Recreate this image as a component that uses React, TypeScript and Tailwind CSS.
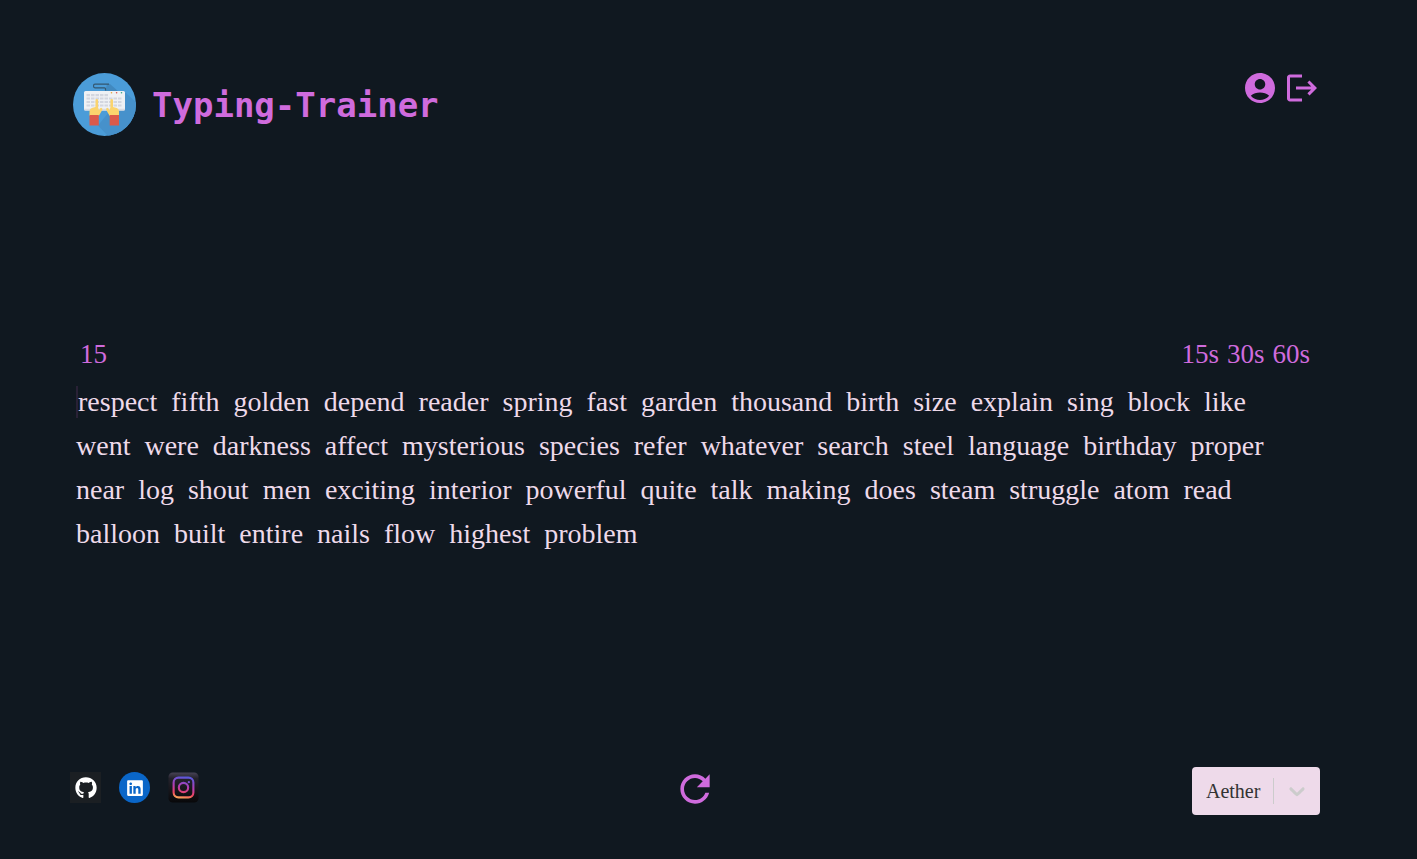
import { useState } from "react";
import type { ReactNode } from "react";
import { FaGithub, FaLinkedin } from "react-icons/fa";

const WORDS =
  "respect fifth golden depend reader spring fast garden thousand birth size explain sing block like went were darkness affect mysterious species refer whatever search steel language birthday proper near log shout men exciting interior powerful quite talk making does steam struggle atom read balloon built entire nails flow highest problem".split(
    " ",
  );

const DURATIONS = [15, 30, 60];

function Hand() {
  return (
    <>
      <path
        d="M17.5 44v-4.500q0-2.800 2.300-3.400l3.700-1.100V28.300q0-1.300 1.300-1.300t1.300 1.300V35.500l.9 3 1.200-2.300q.9-1 1.900.1.500.9 0 2l-3.300 5.700z"
        fill="#fbd46d"
      />
      <path d="M17.500 43h9.300v10.500h-9.300z" fill="#dc5a4b" />
    </>
  );
}

function Logo() {
  return (
    <svg viewBox="0 0 64 64" className="size-16" aria-hidden="true">
      <defs>
        <clipPath id="logo-disc">
          <circle cx="32.5" cy="32.5" r="31.5" />
        </clipPath>
      </defs>
      <g clipPath="url(#logo-disc)">
        <rect width="64" height="64" fill="#4b9cd8" />
        <path d="M35 12h3l9 8H33z" fill="#4189bf" />
        <path d="M53 20 66 32V66H38L26 53.500z" fill="#4691cb" />
        <path
          d="M33.500 18.500v-1.700q0-1-1-1H23q-1.500 0-1.500-1.800t1.500-1.800h14"
          fill="none"
          stroke="#34566e"
          strokeWidth="1.200"
        />
        <rect x="12" y="19" width="41" height="19.500" rx="1.500" fill="#eff1f4" />
        <path d="M12 36.800h41v.5q0 1.200-1.200 1.200H13.200q-1.200 0-1.200-1.200z" fill="#d8dbe2" />
        <path
          d="M14.500 23.200h22M14.500 26.500h36M14.500 30h36M14.500 33.500h36"
          stroke="#d3d6df"
          strokeWidth="2.200"
          strokeDasharray="3.500 1"
        />
        <circle cx="39.500" cy="20.800" r=".8" fill="#e7a53b" />
        <circle cx="44.600" cy="20.800" r=".8" fill="#d9534a" />
        <circle cx="49.500" cy="20.800" r=".8" fill="#35a58b" />
        <Hand />
        <g transform="translate(64.500 0) scale(-1 1)">
          <Hand />
        </g>
      </g>
    </svg>
  );
}

function InstagramLogo() {
  return (
    <svg viewBox="0 0 32 32" className="size-[31px]" aria-hidden="true">
      <defs>
        <linearGradient id="ig-tile" x1="0" y1="0" x2="0" y2="1">
          <stop offset="0" stopColor="#474355" />
          <stop offset=".2" stopColor="#24222b" />
          <stop offset="1" stopColor="#08080a" />
        </linearGradient>
        <linearGradient id="ig-glyph" gradientUnits="userSpaceOnUse" x1="18" y1="5" x2="14" y2="27">
          <stop offset="0" stopColor="#5a58dc" />
          <stop offset=".5" stopColor="#b83cae" />
          <stop offset=".8" stopColor="#ee4560" />
          <stop offset="1" stopColor="#f9a35a" />
        </linearGradient>
      </defs>
      <rect x=".5" y=".5" width="31" height="31" rx="4.500" fill="url(#ig-tile)" />
      <g fill="none" stroke="url(#ig-glyph)" strokeWidth="2.200">
        <rect x="5.800" y="5.800" width="20.400" height="20.400" rx="5" />
        <circle cx="16" cy="16" r="4.800" />
      </g>
      <circle cx="21.500" cy="10.500" r="1.200" fill="#7a50d4" />
    </svg>
  );
}

function Icon({ path, className }: { path: string; className: string }) {
  return (
    <svg viewBox="0 0 24 24" fill="currentColor" className={className} aria-hidden="true">
      <path d={path} />
    </svg>
  );
}

function SocialLink({ href, label, children }: { href: string; label: string; children: ReactNode }) {
  return (
    <a href={href} aria-label={label} className="flex size-[31px] items-center justify-center">
      {children}
    </a>
  );
}

export default function App() {
  const [duration, setDuration] = useState(15);

  return (
    <div className="flex min-h-screen flex-col justify-between bg-[#101820] pt-[70px] pr-[97px] pb-11 pl-[70px] font-['Liberation_Serif',serif] text-[#cf6bdd]">
      <header className="flex items-start justify-between">
        <div className="flex items-center gap-4 pt-0.5 pl-0.5">
          <Logo />
          <h1 className="pt-0.5 font-['DejaVu_Sans_Mono',monospace] text-[34px] leading-10 font-bold">
            Typing-Trainer
          </h1>
        </div>
        <nav className="flex gap-1.5">
          <button type="button" aria-label="Account">
            <Icon
              className="size-9"
              path="M12 2C6.48 2 2 6.48 2 12s4.48 10 10 10 10-4.48 10-10S17.52 2 12 2zm0 4c1.93 0 3.5 1.57 3.5 3.5S13.93 13 12 13s-3.5-1.57-3.5-3.5S10.07 6 12 6zm0 14c-2.03 0-4.43-.82-6.14-2.88C7.55 15.8 9.68 15 12 15s4.45.8 6.14 2.12C16.43 19.18 14.03 20 12 20z"
            />
          </button>
          <button type="button" aria-label="Log out">
            <Icon
              className="size-9"
              path="m17 7-1.41 1.41L18.17 11H8v2h10.17l-2.58 2.58L17 17l5-5zM4 5h8V3H4c-1.1 0-2 .9-2 2v14c0 1.1.9 2 2 2h8v-2H4V5z"
            />
          </button>
        </nav>
      </header>

      <main className="flex flex-col gap-2.5 pr-2.5 pb-2.5 pl-1.5">
        <div className="flex justify-between pl-1 text-[27px] leading-8">
          <span>{duration}</span>
          <div className="flex gap-2">
            {DURATIONS.map((seconds) => (
              <button key={seconds} type="button" onClick={() => setDuration(seconds)}>
                {seconds}s
              </button>
            ))}
          </div>
        </div>
        <div className="flex flex-wrap gap-x-3.5 text-[28px] leading-11 text-[#eedaea]">
          {WORDS.map((word, index) => (
            <span
              key={word}
              className={
                index === 0
                  ? "bg-[linear-gradient(#292136,#292136)] bg-[length:2px_32px] bg-[position:left_center] bg-no-repeat pl-0.5"
                  : ""
              }
            >
              {word}
            </span>
          ))}
        </div>
      </main>

      <footer className="grid grid-cols-3 items-start">
        <div className="flex gap-[18px] pt-[5px]">
          <SocialLink href="#github" label="GitHub">
            <span className="flex size-[31px] items-center justify-center bg-[#1b1f23]">
              <FaGithub className="size-[22px] text-white" />
            </span>
          </SocialLink>
          <SocialLink href="#linkedin" label="LinkedIn">
            <span className="flex size-[31px] items-center justify-center rounded-full bg-[#0a66c8]">
              <FaLinkedin className="size-[18px] text-white" />
            </span>
          </SocialLink>
          <SocialLink href="#instagram" label="Instagram">
            <InstagramLogo />
          </SocialLink>
        </div>
        <button type="button" aria-label="Restart" className="justify-self-center">
          <Icon
            className="size-11"
            path="M17.65 6.35C16.2 4.9 14.21 4 12 4c-4.42 0-7.99 3.58-7.99 8s3.57 8 7.99 8c3.73 0 6.84-2.55 7.73-6h-2.08c-.82 2.33-3.04 4-5.65 4-3.31 0-6-2.69-6-6s2.69-6 6-6c1.66 0 3.14.69 4.22 1.78L13 11h7V4l-2.35 2.35z"
          />
        </button>
        <div className="relative justify-self-end">
          <select
            aria-label="Theme"
            defaultValue="Aether"
            className="block h-12 w-32 appearance-none rounded bg-[#eedaea] pr-12 pl-3.5 text-[20px] text-[#333333]"
          >
            <option>Aether</option>
          </select>
          <div className="pointer-events-none absolute inset-y-0 right-0 flex items-center">
            <span className="h-[26px] w-px bg-[#cccccc]" />
            <svg viewBox="0 0 20 20" fill="#cccccc" className="mx-2.5 size-[26px]" aria-hidden="true">
              <path d="M4.516 7.548c0.436-0.446 1.043-0.481 1.576 0l3.908 3.747 3.908-3.747c0.533-0.481 1.141-0.446 1.574 0 0.436 0.445 0.408 1.197 0 1.615-0.406 0.418-4.695 4.502-4.695 4.502-0.217 0.223-0.502 0.335-0.787 0.335s-0.570-0.112-0.789-0.335c0 0-4.287-4.084-4.695-4.502s-0.436-1.170 0-1.615z" />
            </svg>
          </div>
        </div>
      </footer>
    </div>
  );
}
